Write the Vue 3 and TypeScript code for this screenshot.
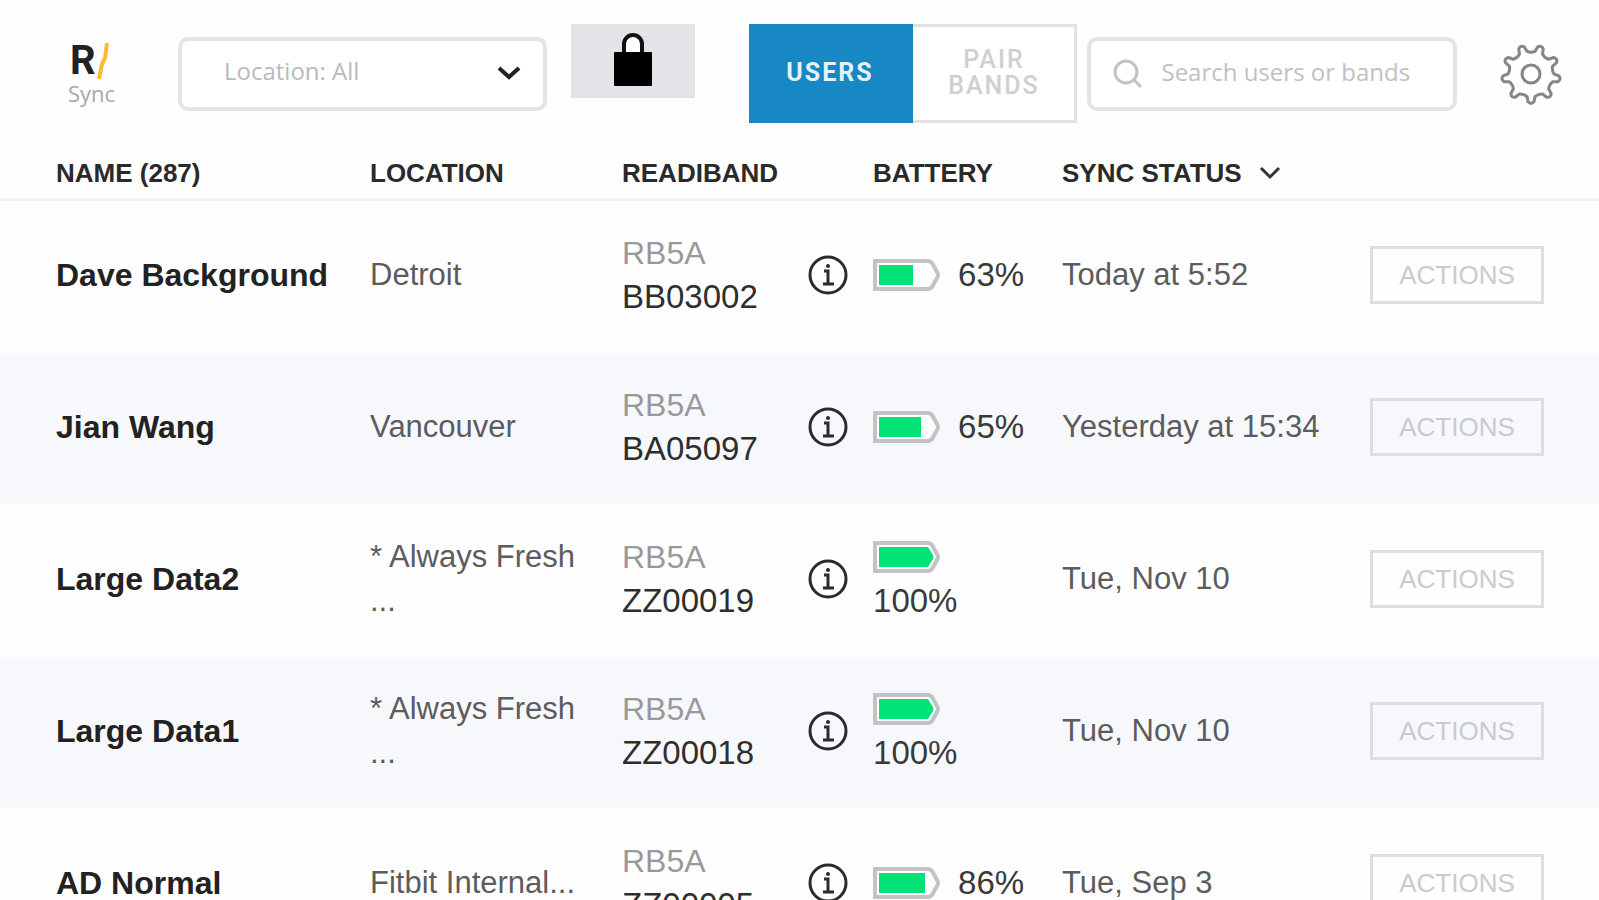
<script setup lang="ts">
import { computed, ref } from 'vue'

interface User {
  name: string
  location: string
  model: string
  band: string
  battery: number
  charge: number
  synced: string
}

// `charge` is the width of the coloured bar inside the battery icon
const users: User[] = [
  { name: 'Dave Background', location: 'Detroit', model: 'RB5A', band: 'BB03002', battery: 63, charge: 34, synced: 'Today at 5:52' },
  { name: 'Jian Wang', location: 'Vancouver', model: 'RB5A', band: 'BA05097', battery: 65, charge: 42, synced: 'Yesterday at 15:34' },
  { name: 'Large Data2', location: '* Always Fresh ...', model: 'RB5A', band: 'ZZ00019', battery: 100, charge: 54, synced: 'Tue, Nov 10' },
  { name: 'Large Data1', location: '* Always Fresh ...', model: 'RB5A', band: 'ZZ00018', battery: 100, charge: 54, synced: 'Tue, Nov 10' },
  { name: 'AD Normal', location: 'Fitbit Internal...', model: 'RB5A', band: 'ZZ00005', battery: 86, charge: 46, synced: 'Tue, Sep 3' },
]

const total = 287
const view = ref<'users' | 'pair'>('users')
const location = ref('all')
const query = ref('')

// Outline of a nine-toothed gear around (32, 32)
const gearPath = computed(() => {
  const at = (radius: number, degrees: number) => {
    const a = (degrees * Math.PI) / 180
    return `${(32 + radius * Math.cos(a)).toFixed(2)} ${(32 + radius * Math.sin(a)).toFixed(2)}`
  }
  let d = ''
  for (let i = 0; i < 9; i++) {
    const c = 90 + i * 40
    d += `${i === 0 ? 'M' : 'L'}${at(23, c - 10)} L${at(28, c - 6)} Q${at(31, c)} ${at(28, c + 6)} L${at(23, c + 10)} Q${at(21, c + 20)} ${at(23, c + 30)} `
  }
  return d + 'Z'
})
</script>

<template>
  <main class="page">
    <header class="topbar">
      <a class="logo" href="#" aria-label="R/ Sync">
        <span class="mark">R<svg viewBox="0 0 14 38" width="14" height="38" aria-hidden="true"><path d="M11 1 L9 16 L6 22 L3 37" /></svg></span>
        <span class="product">Sync</span>
      </a>

      <div class="picker">
        <select v-model="location" aria-label="Location">
          <option value="all">Location: All</option>
        </select>
        <svg class="picker-arrow" viewBox="0 0 26 16" width="26" height="16" aria-hidden="true"><path d="M3 3 L13 12 L23 3" /></svg>
      </div>

      <button class="lock" type="button" aria-label="Lock">
        <svg viewBox="0 0 40 56" width="40" height="56" aria-hidden="true">
          <path class="hole" d="M12 22 V12 a8 8 0 0 1 16 0 V22 Z" />
          <path class="shackle" d="M11 23 V12 a9 9 0 0 1 18 0 V23" />
          <rect x="1" y="20" width="38" height="34" rx="1" />
        </svg>
      </button>

      <div class="tabs">
        <button type="button" :class="{ active: view === 'users' }" @click="view = 'users'">USERS</button>
        <button type="button" :class="{ active: view === 'pair' }" @click="view = 'pair'">PAIR BANDS</button>
      </div>

      <label class="search">
        <svg viewBox="0 0 30 30" width="30" height="30" aria-hidden="true"><circle cx="13" cy="13" r="11" /><path d="M21 21 L28 28" /></svg>
        <input v-model="query" type="text" placeholder="Search users or bands" aria-label="Search users or bands" />
      </label>

      <button class="settings" type="button" aria-label="Settings">
        <svg viewBox="0 0 64 64" width="64" height="64" aria-hidden="true"><path :d="gearPath" /><circle cx="32" cy="32" r="9" /></svg>
      </button>
    </header>

    <table class="users">
      <colgroup>
        <col class="c-name" /><col class="c-location" /><col class="c-band" /><col class="c-battery" /><col class="c-sync" /><col />
      </colgroup>
      <thead>
        <tr>
          <th scope="col">NAME ({{ total }})</th>
          <th scope="col">LOCATION</th>
          <th scope="col">READIBAND</th>
          <th scope="col">BATTERY</th>
          <th scope="col" aria-sort="descending">
            <button class="sort" type="button">SYNC STATUS
              <svg viewBox="0 0 24 14" width="24" height="14" aria-hidden="true"><path d="M3 2 L12 11 L21 2" /></svg>
            </button>
          </th>
          <td></td>
        </tr>
      </thead>
      <tbody>
        <tr v-for="user in users" :key="user.band">
          <th scope="row">{{ user.name }}</th>
          <td class="place">{{ user.location }}</td>
          <td class="band-cell">
            <div class="band">
              <div><span class="model">{{ user.model }}</span><span class="serial">{{ user.band }}</span></div>
              <button class="info" type="button" aria-label="Band details">
                <svg viewBox="0 0 42 42" width="42" height="42" aria-hidden="true">
                  <circle class="ring" cx="21" cy="21" r="18" />
                  <circle class="dot" cx="21" cy="12" r="2" />
                  <path class="stem" d="M17 17 H21 V30 M16 30 H27" />
                </svg>
              </button>
            </div>
          </td>
          <td class="battery-cell">
            <div class="battery">
              <svg viewBox="0 0 67 32" width="67" height="32" aria-hidden="true">
                <path class="case" d="M2 2 H56 L59 4 L64 13 Q66 16 64 19 L59 28 L56 30 H2 Z" />
                <path v-if="user.battery === 100" class="charge" d="M6 6 H55 L60 14 Q61 16 60 18 L55 26 H6 Z" />
                <rect v-else class="charge" x="6" y="6" :width="user.charge" height="20" />
              </svg>
              <span>{{ user.battery }}%</span>
            </div>
          </td>
          <td class="synced">{{ user.synced }}</td>
          <td><button class="actions" type="button">ACTIONS</button></td>
        </tr>
      </tbody>
    </table>
  </main>
</template>

<style>
body {
  background: #fefefe;
}
</style>

<style scoped>
.page {
  height: 100vh;
  overflow: hidden;
  font-family: "Liberation Sans", Arial, sans-serif;
  color: #2a2a2a;
}

* {
  box-sizing: border-box;
}

button {
  padding: 0;
  border: 0;
  background: none;
  font: inherit;
  color: inherit;
}

svg {
  display: block;
  flex: none;
  fill: none;
}

.topbar {
  display: flex;
  align-items: center;
  padding: 24px 36px 24px 68px;
}

.logo {
  flex: none;
  width: 48px;
  margin-right: 62px;
  text-decoration: none;
}

.mark {
  display: flex;
  align-items: center;
  padding-left: 2px;
  font: 700 40px/38px Roboto, sans-serif;
  color: #222;
}

.mark svg path {
  stroke: #fdb934;
  stroke-width: 4;
}

.product {
  display: block;
  font: 400 22px/26px "Open Sans", sans-serif;
  color: #a8a8a8;
}

.picker {
  position: relative;
  flex: 1 1 370px;
  min-width: 0;
}

select {
  display: block;
  width: 100%;
  height: 74px;
  padding: 0 64px 6px 42px;
  border: 4px solid #e4e4e4;
  border-radius: 10px;
  background: #fff;
  appearance: none;
  font: 400 24px/32px "Open Sans", sans-serif;
  color: #b9b9be;
}

.picker-arrow {
  position: absolute;
  right: 25px;
  top: 28px;
  pointer-events: none;
}

.picker-arrow path {
  stroke: #222;
  stroke-width: 4;
}

.lock {
  display: flex;
  flex: none;
  justify-content: center;
  align-self: flex-start;
  width: 124px;
  height: 74px;
  margin: 0 54px 0 24px;
  padding-top: 8px;
  background: #e3e3e8;
}

.lock rect {
  fill: #000;
}

.lock .hole {
  fill: #fff;
}

.lock .shackle {
  stroke: #111;
  stroke-width: 4;
}

.tabs {
  display: flex;
  flex: none;
  margin-right: 10px;
}

.tabs button {
  width: 164px;
  height: 99px;
  padding: 0 34px 2px;
  border: 3px solid #e2e2e4;
  border-left-width: 0;
  background: #fff;
  font: 500 25px/26px Roboto, sans-serif;
  letter-spacing: 2px;
  color: #cfcfd2;
}

.tabs .active {
  border-color: #1788c3;
  background: #1788c3;
  font-weight: 700;
  color: #e4f1f9;
}

.search {
  display: flex;
  flex: 1 1 370px;
  align-items: center;
  gap: 18px;
  min-width: 0;
  height: 74px;
  margin-right: 42px;
  padding: 0 20px 0 22px;
  border: 4px solid #e4e4e4;
  border-radius: 10px;
  background: #fff;
}

.search svg {
  stroke: #c2c2c4;
  stroke-width: 3;
}

.search input {
  flex: 1;
  min-width: 0;
  height: 60px;
  padding: 0 0 4px;
  border: 0;
  outline: 0;
  background: none;
  font: 400 24px/32px "Open Sans", sans-serif;
  color: #555;
}

.search input::placeholder {
  color: #c0c0c5;
  opacity: 1;
}

.settings {
  flex: none;
}

.settings svg {
  stroke: #85858a;
  stroke-width: 3;
  stroke-linejoin: round;
}

.users {
  width: 100%;
  table-layout: fixed;
  border-collapse: separate;
  border-spacing: 0;
}

.c-name { width: 23.14%; }
.c-location { width: 15.76%; }
.c-band { width: 15.7%; }
.c-battery { width: 11.82%; }
.c-sync { width: 19.26%; }

th,
td {
  padding: 0;
  text-align: left;
  white-space: nowrap;
}

th:first-child {
  padding-left: 56px;
}

thead th,
thead td {
  height: 54px;
  border-bottom: 3px solid #f3f3f5;
  font-size: 26px;
  line-height: 30px;
}

.sort {
  display: flex;
  align-items: center;
  gap: 16px;
  font-weight: 700;
}

.sort path {
  stroke: #333;
  stroke-width: 3;
}

tbody th,
tbody td {
  height: 152px;
  padding-bottom: 4px;
  font-size: 31px;
  line-height: 44px;
  color: #5c5c5e;
}

tbody tr:nth-child(even) {
  background: #f7f8fb;
}

tbody th {
  font-size: 32px;
  color: #222;
}

tbody .place {
  padding-right: 38px;
  white-space: normal;
}

.band {
  display: flex;
  align-items: center;
  justify-content: space-between;
  padding-right: 24px;
}

.model,
.serial {
  display: block;
}

.model {
  font-size: 32px;
  color: #98989d;
}

.serial {
  font-size: 33px;
  color: #2e2e2e;
}

.info .ring,
.info .stem {
  stroke: #2b2b2b;
  stroke-width: 3;
}

.info .dot {
  fill: #2b2b2b;
}

tbody .battery-cell {
  padding-right: 28px;
}

.battery {
  display: flex;
  flex-wrap: wrap;
  align-items: center;
  column-gap: 18px;
  font-size: 33px;
  color: #3a3a3a;
}

.battery svg {
  margin: 6px 0;
}

.case {
  fill: #fff;
  stroke: #c3c3c6;
  stroke-width: 4;
}

.charge {
  fill: #00e176;
}

.actions {
  display: block;
  width: 174px;
  height: 58px;
  border: 3px solid #dedee0;
  font-size: 26px;
  line-height: 30px;
  color: #cacace;
}
</style>
